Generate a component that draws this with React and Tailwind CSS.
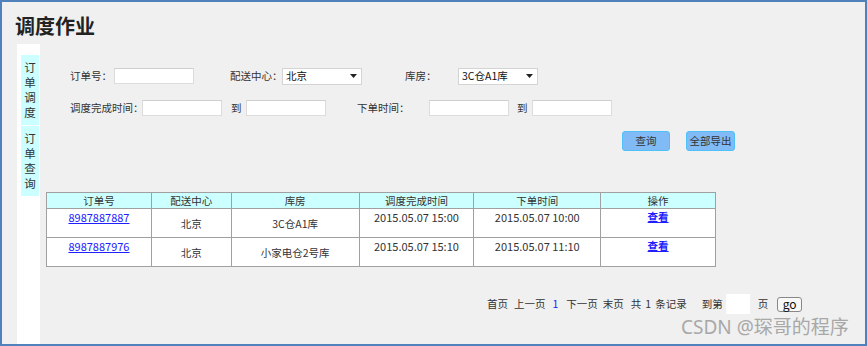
export default function App() {
  const Input = ({ w = "w-[80px]" }) => (
    <div className={`${w} shrink-0 h-[16px] bg-white border border-[#dcdcdc] border-t-[#cfcfcf]`} />
  );
  const Select = ({ value }) => (
    <div className="w-[80px] shrink-0 h-[17px] bg-white border border-[#d4d4d4] flex items-center justify-between pl-[3px] pr-[4px] text-[10.5px] text-[#111]">
      <span>{value}</span>
      <svg width="7" height="4" viewBox="0 0 7 4"><path d="M0 0h7L3.5 4z" fill="#222" /></svg>
    </div>
  );
  const Label = ({ className = "", children }) => (
    <span className={`shrink-0 whitespace-nowrap ${className}`}>{children}</span>
  );
  const rows = [
    { id: "8987887887", center: "北京", store: "3C仓A1库", done: "2015.05.07 15:00", order: "2015.05.07 10:00" },
    { id: "8987887976", center: "北京", store: "小家电仓2号库", done: "2015.05.07 15:10", order: "2015.05.07 11:10" },
  ];
  const td = "border border-[#a0a0a0] text-center";
  return (
    <div className="relative w-[867px] h-[346px] border-2 border-[#4f81bd] bg-[#f0f0f0] flex flex-col text-[#333] overflow-hidden font-['Noto_Sans_CJK_SC','Noto_Sans',sans-serif]">
      <div className="pl-[13px] pt-[10px] h-[42px] text-[20px] leading-[28px] font-bold text-[#222]">调度作业</div>
      <div className="flex flex-1">
        <div className="ml-[15px] w-[23px] shrink-0 bg-white pt-[11px] flex flex-col gap-[1px]">
          {[["订", "单", "调", "度"], ["订", "单", "查", "询"]].map((t, i) => (
            <div key={i} className="ml-[4px] w-[18px] h-[70px] py-[5px] bg-[#ccffff] flex flex-col items-center text-[11.5px] leading-[15px] text-[#333]">
              {t.map((c, j) => (<span key={j} className="block h-[15px]">{c}</span>))}
            </div>
          ))}
        </div>
        <div className="flex-1 flex flex-col">
          <div className="pl-[30px] pt-[24px] text-[10.5px] text-[#333]">
            <div className="flex items-center h-[16px]">
              <Label className="w-[44px]">订单号：</Label>
              <Input />
              <Label className="ml-[36px] w-[52px]">配送中心：</Label>
              <Select value="北京" />
              <Label className="ml-[43px] w-[53px]">库房：</Label>
              <Select value="3C仓A1库" />
            </div>
            <div className="flex items-center h-[16px] mt-[16px]">
              <Label className="w-[72px]">调度完成时间：</Label>
              <Input />
              <Label className="ml-[9px] w-[15px]">到</Label>
              <Input />
              <Label className="ml-[31px] w-[72px]">下单时间：</Label>
              <Input />
              <Label className="ml-[8px] w-[15px]">到</Label>
              <Input />
            </div>
          </div>
          <div className="mt-[15px] pl-[582px] flex gap-[16px] text-[10.5px]">
            <div className="w-[48px] h-[20px] rounded-[3px] bg-[#80bbf6] border border-[#4fc0f8] flex items-center justify-center text-[#333]">查询</div>
            <div className="w-[49px] h-[20px] rounded-[3px] bg-[#80bbf6] border border-[#4fc0f8] flex items-center justify-center text-[#333]">全部导出</div>
          </div>
          <div className="mt-[41px] ml-[6px]">
            <table className="border-collapse w-[670px] text-[10.5px] border border-[#999]">
              <colgroup>
                <col className="w-[105px]" /><col className="w-[80px]" /><col className="w-[128px]" />
                <col className="w-[115px]" /><col className="w-[127px]" /><col className="w-[115px]" />
              </colgroup>
              <thead>
                <tr className="h-[16px] bg-[#ccffff]">
                  {["订单号", "配送中心", "库房", "调度完成时间", "下单时间", "操作"].map((h) => (
                    <th key={h} className={`${td} font-normal leading-[14px] p-0`}>{h}</th>
                  ))}
                </tr>
              </thead>
              <tbody className="bg-white">
                {rows.map((r) => (
                  <tr key={r.id} className="h-[29px]">
                    <td className={`${td} align-top pt-[1px] leading-[14px] text-[11px]`}><span className="text-[#2020ff] underline">{r.id}</span></td>
                    <td className={`${td} align-middle pt-[2px]`}>{r.center}</td>
                    <td className={`${td} align-middle pt-[2px]`}>{r.store}</td>
                    <td className={`${td} align-top pt-[1px] leading-[14px] text-[11px]`}>{r.done}</td>
                    <td className={`${td} align-top pt-[1px] leading-[14px] text-[11px]`}>{r.order}</td>
                    <td className={`${td} align-top pt-[1px] leading-[14px]`}><span className="text-[#2020ff] underline font-bold">查看</span></td>
                  </tr>
                ))}
              </tbody>
            </table>
          </div>
          <div className="mt-[27px] pl-[447px] flex items-center h-[20px] text-[10.5px] text-[#333] whitespace-nowrap">
            <span>首页</span>
            <span className="ml-[6px]">上一页</span>
            <span className="ml-[7px] text-[#2020ff]">1</span>
            <span className="ml-[8px]">下一页</span>
            <span className="ml-[5px]">末页</span>
            <span className="ml-[7px]">共</span>
            <span className="ml-[4px]">1</span>
            <span className="ml-[4px]">条记录</span>
            <span className="ml-[15px]">到第</span>
            <div className="ml-[3px] w-[24px] h-[20px] bg-white" />
            <span className="ml-[8px]">页</span>
            <div className="ml-[9px] w-[25px] h-[15px] rounded-[3px] border border-[#888] bg-[#f8f8f8] flex items-center justify-center text-[12px] leading-none text-[#111]">go</div>
          </div>
        </div>
      </div>
      <div className="absolute left-[679px] top-[311px] text-[19px] text-[#a8a8a8] font-['Noto_Sans','Noto_Sans_CJK_SC',sans-serif] whitespace-nowrap">CSDN @琛哥的程序</div>
    </div>
  );
}
